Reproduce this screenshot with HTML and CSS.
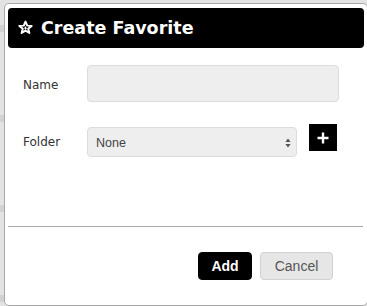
FILE: index.html
```html
<!DOCTYPE html>
<html>
<head>
<meta charset="utf-8">
<link rel="stylesheet" href="styles.css">
</head>
<body>
<div class="stage">
  <div class="dialog">
    <div class="header">
      <svg class="star" width="15" height="15" viewBox="0 0 24 24">
        <path d="M12 2.5 L14.8 9 L21.8 9.4 L16.4 13.9 L18.2 20.8 L12 17 L5.8 20.8 L7.6 13.9 L2.2 9.4 L9.2 9 Z" fill="#000" stroke="#fff" stroke-width="3.2" stroke-linejoin="round"/>
        <path d="M12 10.5 V15.5 M9.5 13 H14.5" stroke="#fff" stroke-width="1.6"/>
      </svg>
      <span class="title">Create Favorite</span>
    </div>
    <div class="form">
      <div class="row row-name">
        <label class="label">Name</label>
        <div class="input"></div>
      </div>
      <div class="row row-folder">
        <label class="label">Folder</label>
        <div class="select">
          <span class="select-text">None</span>
          <svg class="arrows" width="6" height="10" viewBox="0 0 6 10">
            <path d="M3 0.5 L5.6 4 H0.4 Z M3 9.5 L5.6 6 H0.4 Z" fill="#555"/>
          </svg>
        </div>
        <div class="plus">
          <svg width="12" height="12" viewBox="0 0 12 12"><path d="M6 0.5 V11.5 M0.5 6 H11.5" stroke="#fff" stroke-width="2.4"/></svg>
        </div>
      </div>
    </div>
    <div class="divider"></div>
    <div class="footer">
      <button class="btn btn-add">Add</button>
      <button class="btn btn-cancel">Cancel</button>
    </div>
  </div>
</div>
</body>
</html>
```
FILE: styles.css
```css
html, body {
  margin: 0;
  padding: 0;
}
body {
  width: 367px;
  height: 306px;
  overflow: hidden;
  background: repeating-linear-gradient(to bottom, #e3e3e3 0px, #e3e3e3 25px, #d2d2d2 25px, #d2d2d2 32px, #e3e3e3 32px, #e3e3e3 90px);
  font-family: "DejaVu Sans", Verdana, sans-serif;
}
.stage {
  padding: 3px 0 0 4px;
}
.dialog {
  width: 356px;
  height: 297px;
  background: #fff;
  border: 1px solid #a8a8a8;
  border-radius: 5px;
  padding: 4px 3px 0 3px;
  box-sizing: content-box;
  display: flex;
  flex-direction: column;
}
.header {
  height: 40px;
  background: #000;
  border-radius: 4px;
  display: flex;
  align-items: center;
  padding-left: 10px;
  gap: 8px;
}
.star {
  display: block;
  margin-top: -1px;
}
.title {
  color: #fff;
  font-weight: bold;
  font-size: 17.5px;
}
.form {
  padding: 17px 0 0 15px;
  display: flex;
  flex-direction: column;
  gap: 22px;
}
.row {
  display: flex;
  align-items: center;
}
.label {
  width: 64px;
  font-size: 12px;
  color: #333;
}
.row-name .label {
  margin-top: 3px;
}
.input {
  width: 250px;
  height: 35px;
  background: #eee;
  border: 1px solid #dcdcdc;
  border-radius: 4px;
}
.row-folder {
  align-items: flex-start;
}
.row-folder .label {
  margin-top: 11px;
}
.select {
  margin-top: 3px;
  width: 208px;
  height: 28px;
  background: #eee;
  border: 1px solid #dcdcdc;
  border-radius: 4px;
  position: relative;
  display: flex;
  align-items: center;
  font-family: "Liberation Sans", Arial, sans-serif;
  font-size: 12.5px;
  color: #444;
}
.select-text {
  padding-left: 8px;
  padding-top: 1px;
}
.arrows {
  position: absolute;
  right: 5px;
  top: 10px;
}
.plus {
  margin-left: 12px;
  width: 28px;
  height: 27px;
  background: #000;
  display: flex;
  align-items: center;
  justify-content: center;
}
.divider {
  margin-top: 69px;
  height: 1px;
  background: #aaa;
  margin-right: 1px;
}
.footer {
  display: flex;
  justify-content: flex-end;
  gap: 8px;
  padding: 25px 31px 0 0;
}
.btn {
  height: 28px;
  border-radius: 4px;
  font-family: "Liberation Sans", Arial, sans-serif;
  font-size: 13px;
  padding: 0;
  margin: 0;
}
.btn-add {
  width: 54px;
  background: #000;
  color: #fff;
  border: 1px solid #000;
  font-weight: bold;
  font-size: 14px;
}
.btn-cancel {
  width: 73px;
  background: #e6e6e6;
  color: #555;
  border: 1px solid #d0d0d0;
  font-size: 14px;
}
```
